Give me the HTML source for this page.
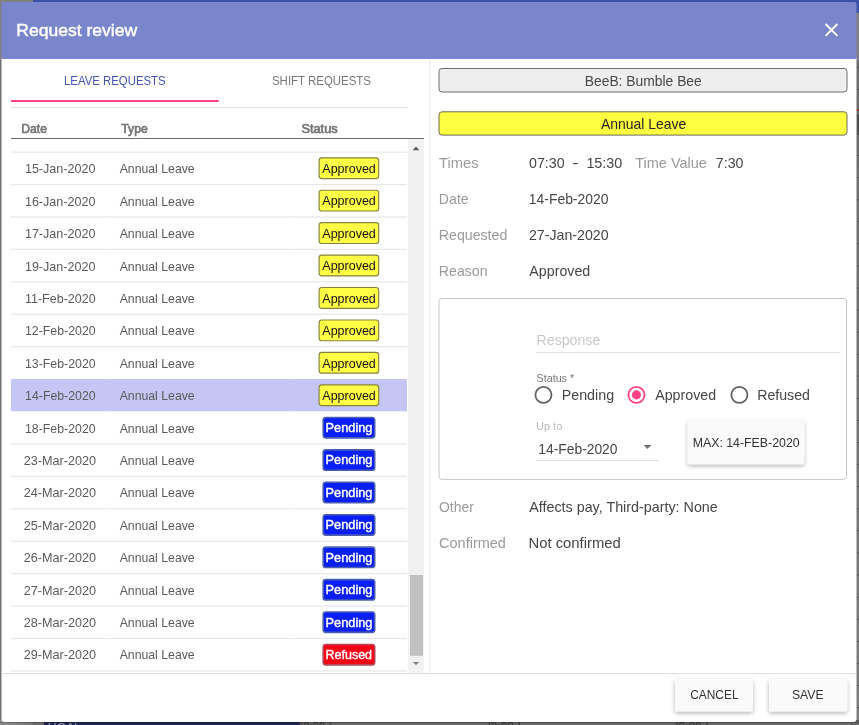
<!DOCTYPE html>
<html><head><meta charset="utf-8"><title>Request review</title>
<style>
html,body{margin:0;padding:0}
body{width:859px;height:725px;overflow:hidden;position:relative;background:#808080;font-family:"Liberation Sans", sans-serif;}
.a{position:absolute}
.t{position:absolute;left:0;top:0;white-space:pre;line-height:20px;transform-origin:0 0;font-family:"Liberation Sans", sans-serif;}
</style></head><body>
<svg class="a" style="left:0;top:0" width="859" height="725" viewBox="0 0 859 725">
<defs><filter id="bs" x="-20%" y="-30%" width="140%" height="180%"><feDropShadow dx="0" dy="1.8" stdDeviation="2" flood-color="#000" flood-opacity=".3"/></filter></defs>
<defs><linearGradient id="gbl" x1="0" x2="1" y1="0" y2="0"><stop offset="0" stop-color="#8e8e8e"/><stop offset="1" stop-color="#747474"/></linearGradient><linearGradient id="gbb" x1="0" x2="0" y1="0" y2="1"><stop offset="0" stop-color="#4c4c4c"/><stop offset="0.45" stop-color="#626262"/><stop offset="1" stop-color="#6a6a6a"/></linearGradient><linearGradient id="gtb" x1="0" x2="0" y1="0" y2="1"><stop offset="0" stop-color="#3d54ab"/><stop offset="1" stop-color="#364ba1"/></linearGradient><linearGradient id="grs" x1="0" x2="0" y1="0" y2="1"><stop offset="0" stop-color="#6c6c6c"/><stop offset="1" stop-color="#7e7e7e"/></linearGradient></defs>
<rect x="0.00" y="0.00" width="859.00" height="725.00" fill="#707070"/>
<rect x="0.00" y="0.00" width="33.00" height="3.00" fill="#808080"/>
<rect x="33.00" y="0.00" width="826.00" height="12.90" fill="#3b52a9"/>
<rect x="33.00" y="0.00" width="826.00" height="2.50" fill="url(#gtb)"/>
<rect x="0.00" y="2.00" width="3.00" height="58.00" fill="#808080"/>
<rect x="0.00" y="60.00" width="3.00" height="662.00" fill="#707070"/>
<rect x="855.00" y="12.90" width="4.00" height="50.00" fill="#808080"/>
<rect x="855.00" y="60.00" width="4.00" height="665.00" fill="url(#grs)"/>
<rect x="857.30" y="66.68" width="1.70" height="1.00" fill="#4a4a4a"/>
<rect x="857.30" y="88.76" width="1.70" height="1.00" fill="#4a4a4a"/>
<rect x="856.60" y="109.34" width="2.40" height="1.60" fill="#9a2525"/>
<rect x="857.30" y="155.00" width="1.70" height="1.00" fill="#4a4a4a"/>
<rect x="857.30" y="177.08" width="1.70" height="1.00" fill="#4a4a4a"/>
<rect x="857.30" y="199.16" width="1.70" height="1.00" fill="#4a4a4a"/>
<rect x="857.30" y="221.24" width="1.70" height="1.00" fill="#4a4a4a"/>
<rect x="857.30" y="243.32" width="1.70" height="1.00" fill="#4a4a4a"/>
<rect x="857.30" y="265.40" width="1.70" height="1.00" fill="#4a4a4a"/>
<rect x="857.30" y="287.48" width="1.70" height="1.00" fill="#4a4a4a"/>
<rect x="857.30" y="309.56" width="1.70" height="1.00" fill="#4a4a4a"/>
<rect x="857.30" y="331.64" width="1.70" height="1.00" fill="#4a4a4a"/>
<rect x="857.30" y="353.72" width="1.70" height="1.00" fill="#4a4a4a"/>
<rect x="857.30" y="375.80" width="1.70" height="1.00" fill="#4a4a4a"/>
<rect x="857.30" y="397.88" width="1.70" height="1.00" fill="#4a4a4a"/>
<rect x="857.30" y="419.96" width="1.70" height="1.00" fill="#4a4a4a"/>
<rect x="857.30" y="442.04" width="1.70" height="1.00" fill="#4a4a4a"/>
<rect x="857.30" y="464.12" width="1.70" height="1.00" fill="#4a4a4a"/>
<rect x="857.30" y="486.20" width="1.70" height="1.00" fill="#4a4a4a"/>
<rect x="857.30" y="508.28" width="1.70" height="1.00" fill="#4a4a4a"/>
<rect x="857.30" y="530.36" width="1.70" height="1.00" fill="#4a4a4a"/>
<rect x="857.30" y="552.44" width="1.70" height="1.00" fill="#4a4a4a"/>
<rect x="857.30" y="574.52" width="1.70" height="1.00" fill="#4a4a4a"/>
<rect x="857.30" y="596.60" width="1.70" height="1.00" fill="#4a4a4a"/>
<rect x="857.30" y="618.68" width="1.70" height="1.00" fill="#4a4a4a"/>
<rect x="857.30" y="640.76" width="1.70" height="1.00" fill="#4a4a4a"/>
<rect x="857.30" y="662.84" width="1.70" height="1.00" fill="#4a4a4a"/>
<rect x="857.30" y="684.92" width="1.70" height="1.00" fill="#4a4a4a"/>
<rect x="857.30" y="707.00" width="1.70" height="1.00" fill="#4a4a4a"/>
<rect x="857.30" y="114.30" width="1.70" height="20.40" fill="#484848"/>
<rect x="0.00" y="720.00" width="33.00" height="5.00" fill="url(#gbl)"/>
<rect x="33.00" y="720.00" width="11.00" height="5.00" fill="#696969"/>
<rect x="44.00" y="720.00" width="256.00" height="5.00" fill="#1e2350"/>
<rect x="300.00" y="720.00" width="559.00" height="5.00" fill="url(#gbb)"/>
<rect x="0.00" y="721.90" width="859.00" height="1.10" fill="#000" opacity=".22"/>
<path d="M1.5 58 H856.5 V718.95 a3 3 0 0 1 -3 3 H4.5 a3 3 0 0 1 -3 -3 Z" fill="#fff"/>
<path d="M1.5 59 V4 a2 2 0 0 1 2 -2 H854.5 a2 2 0 0 1 2 2 V59 Z" fill="#7986cb"/>
<path d="M825.55 23.95 L837.45 35.85 M837.45 23.95 L825.55 35.85" stroke="#fff" stroke-width="1.95" fill="none"/>
<rect x="11.00" y="100.00" width="207.60" height="2.00" fill="#ff4081"/>
<rect x="11.00" y="107.00" width="396.50" height="1.00" fill="#e2e2e2"/>
<rect x="11.00" y="138.00" width="413.00" height="1.00" fill="#6c6c6c"/>
<rect x="408.20" y="139.00" width="15.60" height="533.80" fill="#f1f1f1"/>
<rect x="410.00" y="575.00" width="13.00" height="80.80" fill="#c1c1c1"/>
<path d="M412.7 150.2 L416 146.7 L419.3 150.2 Z" fill="#505050"/>
<path d="M412.7 661.9 L419.3 661.9 L416 665.3 Z" fill="#858585"/>
<rect x="11.00" y="151.55" width="396.00" height="1.20" fill="#e7e7e7"/>
<rect x="11.00" y="183.97" width="396.00" height="1.20" fill="#e7e7e7"/>
<rect x="11.00" y="216.40" width="396.00" height="1.20" fill="#e7e7e7"/>
<rect x="11.00" y="248.83" width="396.00" height="1.20" fill="#e7e7e7"/>
<rect x="11.00" y="281.25" width="396.00" height="1.20" fill="#e7e7e7"/>
<rect x="11.00" y="313.67" width="396.00" height="1.20" fill="#e7e7e7"/>
<rect x="11.00" y="346.10" width="396.00" height="1.20" fill="#e7e7e7"/>
<rect x="11.00" y="443.38" width="396.00" height="1.20" fill="#e7e7e7"/>
<rect x="11.00" y="475.80" width="396.00" height="1.20" fill="#e7e7e7"/>
<rect x="11.00" y="508.22" width="396.00" height="1.20" fill="#e7e7e7"/>
<rect x="11.00" y="540.65" width="396.00" height="1.20" fill="#e7e7e7"/>
<rect x="11.00" y="573.07" width="396.00" height="1.20" fill="#e7e7e7"/>
<rect x="11.00" y="605.50" width="396.00" height="1.20" fill="#e7e7e7"/>
<rect x="11.00" y="637.92" width="396.00" height="1.20" fill="#e7e7e7"/>
<rect x="11.00" y="670.35" width="396.00" height="1.20" fill="#e7e7e7"/>
<rect x="108.70" y="139.00" width="1.00" height="533.00" fill="#fff" opacity=".8"/>
<rect x="289.70" y="139.00" width="1.00" height="533.00" fill="#fff" opacity=".8"/>
<rect x="11.00" y="379.00" width="396.00" height="32.30" fill="#c6c6f4"/>
<rect x="108.90" y="378.80" width="1.00" height="0.90" fill="#fff" opacity=".7"/>
<rect x="108.90" y="410.50" width="1.00" height="0.90" fill="#fff" opacity=".7"/>
<rect x="289.90" y="378.80" width="1.00" height="0.90" fill="#fff" opacity=".7"/>
<rect x="289.90" y="410.50" width="1.00" height="0.90" fill="#fff" opacity=".7"/>
<rect x="319.10" y="157.80" width="59.60" height="20.80" fill="#ffff45" rx="2.8" stroke="#86843c" stroke-width="1.15"/>
<rect x="319.10" y="190.23" width="59.60" height="20.80" fill="#ffff45" rx="2.8" stroke="#86843c" stroke-width="1.15"/>
<rect x="319.10" y="222.66" width="59.60" height="20.80" fill="#ffff45" rx="2.8" stroke="#86843c" stroke-width="1.15"/>
<rect x="319.10" y="255.09" width="59.60" height="20.80" fill="#ffff45" rx="2.8" stroke="#86843c" stroke-width="1.15"/>
<rect x="319.10" y="287.52" width="59.60" height="20.80" fill="#ffff45" rx="2.8" stroke="#86843c" stroke-width="1.15"/>
<rect x="319.10" y="319.95" width="59.60" height="20.80" fill="#ffff45" rx="2.8" stroke="#86843c" stroke-width="1.15"/>
<rect x="319.10" y="352.38" width="59.60" height="20.80" fill="#ffff45" rx="2.8" stroke="#86843c" stroke-width="1.15"/>
<rect x="319.10" y="384.81" width="59.60" height="20.80" fill="#ffff45" rx="2.8" stroke="#86843c" stroke-width="1.15"/>
<rect x="323.20" y="417.44" width="51.50" height="20.40" fill="#0a1ff5" rx="2.6" stroke="#4a5fb2" stroke-width="1.6"/>
<rect x="323.20" y="449.87" width="51.50" height="20.40" fill="#0a1ff5" rx="2.6" stroke="#4a5fb2" stroke-width="1.6"/>
<rect x="323.20" y="482.30" width="51.50" height="20.40" fill="#0a1ff5" rx="2.6" stroke="#4a5fb2" stroke-width="1.6"/>
<rect x="323.20" y="514.73" width="51.50" height="20.40" fill="#0a1ff5" rx="2.6" stroke="#4a5fb2" stroke-width="1.6"/>
<rect x="323.20" y="547.16" width="51.50" height="20.40" fill="#0a1ff5" rx="2.6" stroke="#4a5fb2" stroke-width="1.6"/>
<rect x="323.20" y="579.59" width="51.50" height="20.40" fill="#0a1ff5" rx="2.6" stroke="#4a5fb2" stroke-width="1.6"/>
<rect x="323.20" y="612.02" width="51.50" height="20.40" fill="#0a1ff5" rx="2.6" stroke="#4a5fb2" stroke-width="1.6"/>
<rect x="323.20" y="644.45" width="51.50" height="20.40" fill="#fa0016" rx="2.6" stroke="#b8475a" stroke-width="1.6"/>
<rect x="429.20" y="59.00" width="1.40" height="614.00" fill="#eeeeee"/>
<rect x="1.50" y="673.00" width="855.00" height="1.00" fill="#dcdcdc"/>
<rect x="675.00" y="679.00" width="78.00" height="32.50" fill="#fafafa" rx="2" filter="url(#bs)"/>
<rect x="769.00" y="679.00" width="78.20" height="32.50" fill="#fafafa" rx="2" filter="url(#bs)"/>
<rect x="439.00" y="68.50" width="408.00" height="23.50" fill="#eeeeee" rx="3" stroke="#6c6c6c" stroke-width="1"/>
<rect x="439.00" y="111.80" width="408.00" height="23.30" fill="#ffff42" rx="3" stroke="#6c6c55" stroke-width="1"/>
<rect x="439.00" y="298.50" width="407.50" height="180.90" fill="#fff" rx="3" stroke="#c6c6c6" stroke-width="1"/>
<rect x="536.30" y="352.00" width="304.00" height="1.00" fill="#e0e0e0"/>
<circle cx="543.45" cy="394.9" r="8.05" fill="none" stroke="#616161" stroke-width="1.8"/>
<circle cx="636.45" cy="394.9" r="8.05" fill="none" stroke="#ff4081" stroke-width="1.8"/>
<circle cx="636.45" cy="394.9" r="4.55" fill="#ff4081"/>
<circle cx="739.4" cy="394.9" r="8.05" fill="none" stroke="#616161" stroke-width="1.8"/>
<rect x="536.50" y="460.00" width="122.20" height="1.00" fill="#dddddd"/>
<path d="M643.4 445 L651.6 445 L647.5 449.1 Z" fill="#757575"/>
<rect x="687.70" y="420.60" width="116.40" height="43.60" fill="#fafafa" rx="2" filter="url(#bs)"/>
</svg>
<div class="a" style="left:0;top:0;width:859px;height:725px;will-change:transform">
<span class="t" style="font-size:17.2px;color:#fff;transform:translate(16.26px,19.60px) scaleX(1.0207);-webkit-text-stroke:0.45px #fff">Request review</span>
<span class="t" style="font-size:12.6px;color:#4354b5;transform:translate(64.03px,71.00px) scaleX(0.9033)">LEAVE REQUESTS</span>
<span class="t" style="font-size:12.6px;color:#787878;transform:translate(271.99px,71.00px) scaleX(0.9088)">SHIFT REQUESTS</span>
<span class="t" style="font-size:12.6px;color:#747474;transform:translate(21.32px,119.00px) scaleX(0.9640);-webkit-text-stroke:0.65px #747474">Date</span>
<span class="t" style="font-size:12.6px;color:#747474;transform:translate(121.31px,119.00px) scaleX(0.9647);-webkit-text-stroke:0.65px #747474">Type</span>
<span class="t" style="font-size:12.6px;color:#747474;transform:translate(301.38px,119.00px) scaleX(1.0168);-webkit-text-stroke:0.65px #747474">Status</span>
<span class="t" style="font-size:12.6px;color:#5a5a5a;transform:translate(24.89px,159.40px) scaleX(0.9977)">15-Jan-2020</span>
<span class="t" style="font-size:12.6px;color:#5a5a5a;transform:translate(119.67px,159.40px) scaleX(0.9733)">Annual Leave</span>
<span class="t" style="font-size:12.6px;color:#111;transform:translate(322.32px,159.00px) scaleX(0.9920)">Approved</span>
<span class="t" style="font-size:12.6px;color:#5a5a5a;transform:translate(24.89px,191.80px) scaleX(0.9977)">16-Jan-2020</span>
<span class="t" style="font-size:12.6px;color:#5a5a5a;transform:translate(119.67px,191.80px) scaleX(0.9733)">Annual Leave</span>
<span class="t" style="font-size:12.6px;color:#111;transform:translate(322.32px,191.00px) scaleX(0.9920)">Approved</span>
<span class="t" style="font-size:12.6px;color:#5a5a5a;transform:translate(24.89px,224.20px) scaleX(0.9977)">17-Jan-2020</span>
<span class="t" style="font-size:12.6px;color:#5a5a5a;transform:translate(119.67px,224.20px) scaleX(0.9733)">Annual Leave</span>
<span class="t" style="font-size:12.6px;color:#111;transform:translate(322.32px,224.00px) scaleX(0.9920)">Approved</span>
<span class="t" style="font-size:12.6px;color:#5a5a5a;transform:translate(24.89px,256.60px) scaleX(0.9977)">19-Jan-2020</span>
<span class="t" style="font-size:12.6px;color:#5a5a5a;transform:translate(119.67px,256.60px) scaleX(0.9733)">Annual Leave</span>
<span class="t" style="font-size:12.6px;color:#111;transform:translate(322.32px,256.00px) scaleX(0.9920)">Approved</span>
<span class="t" style="font-size:12.6px;color:#5a5a5a;transform:translate(24.98px,289.00px) scaleX(0.9921)">11-Feb-2020</span>
<span class="t" style="font-size:12.6px;color:#5a5a5a;transform:translate(119.67px,289.00px) scaleX(0.9733)">Annual Leave</span>
<span class="t" style="font-size:12.6px;color:#111;transform:translate(322.32px,289.00px) scaleX(0.9920)">Approved</span>
<span class="t" style="font-size:12.6px;color:#5a5a5a;transform:translate(25.01px,321.40px) scaleX(0.9787)">12-Feb-2020</span>
<span class="t" style="font-size:12.6px;color:#5a5a5a;transform:translate(119.67px,321.40px) scaleX(0.9733)">Annual Leave</span>
<span class="t" style="font-size:12.6px;color:#111;transform:translate(322.32px,321.00px) scaleX(0.9920)">Approved</span>
<span class="t" style="font-size:12.6px;color:#5a5a5a;transform:translate(25.01px,353.80px) scaleX(0.9787)">13-Feb-2020</span>
<span class="t" style="font-size:12.6px;color:#5a5a5a;transform:translate(119.67px,353.80px) scaleX(0.9733)">Annual Leave</span>
<span class="t" style="font-size:12.6px;color:#111;transform:translate(322.32px,354.00px) scaleX(0.9920)">Approved</span>
<span class="t" style="font-size:12.6px;color:#5a5a5a;transform:translate(25.10px,386.20px) scaleX(0.9776)">14-Feb-2020</span>
<span class="t" style="font-size:12.6px;color:#5a5a5a;transform:translate(119.67px,386.20px) scaleX(0.9733)">Annual Leave</span>
<span class="t" style="font-size:12.6px;color:#111;transform:translate(322.32px,386.00px) scaleX(0.9920)">Approved</span>
<span class="t" style="font-size:12.6px;color:#5a5a5a;transform:translate(25.01px,418.60px) scaleX(0.9787)">18-Feb-2020</span>
<span class="t" style="font-size:12.6px;color:#5a5a5a;transform:translate(119.67px,418.60px) scaleX(0.9733)">Annual Leave</span>
<span class="t" style="font-size:12.6px;color:#fff;transform:translate(325.54px,418.00px) scaleX(1.0150);-webkit-text-stroke:0.4px #fff">Pending</span>
<span class="t" style="font-size:12.6px;color:#5a5a5a;transform:translate(23.82px,451.00px) scaleX(1.0026)">23-Mar-2020</span>
<span class="t" style="font-size:12.6px;color:#5a5a5a;transform:translate(119.67px,451.00px) scaleX(0.9733)">Annual Leave</span>
<span class="t" style="font-size:12.6px;color:#fff;transform:translate(325.54px,450.00px) scaleX(1.0150);-webkit-text-stroke:0.4px #fff">Pending</span>
<span class="t" style="font-size:12.6px;color:#5a5a5a;transform:translate(23.82px,483.40px) scaleX(1.0026)">24-Mar-2020</span>
<span class="t" style="font-size:12.6px;color:#5a5a5a;transform:translate(119.67px,483.40px) scaleX(0.9733)">Annual Leave</span>
<span class="t" style="font-size:12.6px;color:#fff;transform:translate(325.54px,483.00px) scaleX(1.0150);-webkit-text-stroke:0.4px #fff">Pending</span>
<span class="t" style="font-size:12.6px;color:#5a5a5a;transform:translate(23.82px,515.80px) scaleX(1.0026)">25-Mar-2020</span>
<span class="t" style="font-size:12.6px;color:#5a5a5a;transform:translate(119.67px,515.80px) scaleX(0.9733)">Annual Leave</span>
<span class="t" style="font-size:12.6px;color:#fff;transform:translate(325.54px,515.00px) scaleX(1.0150);-webkit-text-stroke:0.4px #fff">Pending</span>
<span class="t" style="font-size:12.6px;color:#5a5a5a;transform:translate(23.82px,548.20px) scaleX(1.0026)">26-Mar-2020</span>
<span class="t" style="font-size:12.6px;color:#5a5a5a;transform:translate(119.67px,548.20px) scaleX(0.9733)">Annual Leave</span>
<span class="t" style="font-size:12.6px;color:#fff;transform:translate(325.54px,548.00px) scaleX(1.0150);-webkit-text-stroke:0.4px #fff">Pending</span>
<span class="t" style="font-size:12.6px;color:#5a5a5a;transform:translate(23.82px,580.60px) scaleX(1.0026)">27-Mar-2020</span>
<span class="t" style="font-size:12.6px;color:#5a5a5a;transform:translate(119.67px,580.60px) scaleX(0.9733)">Annual Leave</span>
<span class="t" style="font-size:12.6px;color:#fff;transform:translate(325.54px,580.00px) scaleX(1.0150);-webkit-text-stroke:0.4px #fff">Pending</span>
<span class="t" style="font-size:12.6px;color:#5a5a5a;transform:translate(23.82px,613.00px) scaleX(1.0026)">28-Mar-2020</span>
<span class="t" style="font-size:12.6px;color:#5a5a5a;transform:translate(119.67px,613.00px) scaleX(0.9733)">Annual Leave</span>
<span class="t" style="font-size:12.6px;color:#fff;transform:translate(325.54px,613.00px) scaleX(1.0150);-webkit-text-stroke:0.4px #fff">Pending</span>
<span class="t" style="font-size:12.6px;color:#5a5a5a;transform:translate(23.82px,645.40px) scaleX(1.0026)">29-Mar-2020</span>
<span class="t" style="font-size:12.6px;color:#5a5a5a;transform:translate(119.67px,645.40px) scaleX(0.9733)">Annual Leave</span>
<span class="t" style="font-size:12.6px;color:#fff;transform:translate(325.48px,645.00px) scaleX(0.9926);-webkit-text-stroke:0.4px #fff">Refused</span>
<span class="t" style="font-size:14.4px;color:#484848;transform:translate(584.74px,70.80px) scaleX(0.9625)">BeeB: Bumble Bee</span>
<span class="t" style="font-size:14.4px;color:#222;transform:translate(600.94px,113.60px) scaleX(0.9691)">Annual Leave</span>
<span class="t" style="font-size:14.4px;color:#9a9a9a;transform:translate(439.03px,153.00px) scaleX(1.0227)">Times</span>
<span class="t" style="font-size:14.4px;color:#464646;transform:translate(529.07px,153.00px) scaleX(0.9869)">07:30</span>
<span class="t" style="font-size:14.4px;color:#464646;transform:translate(572.28px,153.00px) scaleX(1.3039)">-</span>
<span class="t" style="font-size:14.4px;color:#464646;transform:translate(586.38px,153.00px) scaleX(0.9986)">15:30</span>
<span class="t" style="font-size:14.4px;color:#9a9a9a;transform:translate(635.22px,153.00px) scaleX(1.0070)">Time Value</span>
<span class="t" style="font-size:14.4px;color:#464646;transform:translate(715.79px,153.00px) scaleX(0.9877)">7:30</span>
<span class="t" style="font-size:14.4px;color:#9a9a9a;transform:translate(438.86px,189.00px) scaleX(0.9816)">Date</span>
<span class="t" style="font-size:14.4px;color:#464646;transform:translate(528.76px,189.00px) scaleX(0.9675)">14-Feb-2020</span>
<span class="t" style="font-size:14.4px;color:#9a9a9a;transform:translate(438.83px,225.00px) scaleX(0.9831)">Requested</span>
<span class="t" style="font-size:14.4px;color:#464646;transform:translate(528.92px,225.00px) scaleX(0.9862)">27-Jan-2020</span>
<span class="t" style="font-size:14.4px;color:#9a9a9a;transform:translate(438.84px,261.00px) scaleX(0.9824)">Reason</span>
<span class="t" style="font-size:14.4px;color:#464646;transform:translate(529.37px,261.00px) scaleX(0.9887)">Approved</span>
<span class="t" style="font-size:14.4px;color:#9a9a9a;transform:translate(438.99px,497.00px) scaleX(0.9680)">Other</span>
<span class="t" style="font-size:14.4px;color:#464646;transform:translate(529.21px,497.00px) scaleX(0.9947)">Affects pay, Third-party: None</span>
<span class="t" style="font-size:14.4px;color:#9a9a9a;transform:translate(439.01px,533.00px) scaleX(1.0083)">Confirmed</span>
<span class="t" style="font-size:14.4px;color:#464646;transform:translate(528.46px,533.00px) scaleX(1.0309)">Not confirmed</span>
<span class="t" style="font-size:14.4px;color:#c8c8c8;transform:translate(536.56px,330.00px) scaleX(0.9829)">Response</span>
<span class="t" style="font-size:10.8px;color:#777;transform:translate(536.53px,368.00px) scaleX(0.9947)">Status *</span>
<span class="t" style="font-size:14.4px;color:#464646;transform:translate(561.74px,384.70px) scaleX(0.9908)">Pending</span>
<span class="t" style="font-size:14.4px;color:#464646;transform:translate(655.22px,384.70px) scaleX(0.9885)">Approved</span>
<span class="t" style="font-size:14.4px;color:#464646;transform:translate(757.18px,384.70px) scaleX(0.9833)">Refused</span>
<span class="t" style="font-size:10.8px;color:#b8b8b8;transform:translate(536.07px,416.20px) scaleX(1.0149)">Up to</span>
<span class="t" style="font-size:14.4px;color:#464646;transform:translate(538.30px,438.80px) scaleX(0.9612)">14-Feb-2020</span>
<span class="t" style="font-size:12.6px;color:#333;transform:translate(692.68px,432.80px) scaleX(0.9791)">MAX: 14-FEB-2020</span>
<span class="t" style="font-size:12.6px;color:#333;transform:translate(690.22px,685.20px) scaleX(0.9451)">CANCEL</span>
<span class="t" style="font-size:12.6px;color:#333;transform:translate(791.93px,685.20px) scaleX(0.9703)">SAVE</span>
<span class="t" style="font-size:12.6px;color:#2a2a2a;transform:translate(300.62px,717.40px) scaleX(0.8751)">|0:00 /</span>
<span class="t" style="font-size:12.6px;color:#2a2a2a;transform:translate(487.77px,717.40px) scaleX(0.9334)">|0:00 /</span>
<span class="t" style="font-size:12.6px;color:#2a2a2a;transform:translate(675.57px,717.40px) scaleX(0.9334)">|0:00 /</span>
<span class="t" style="font-size:13.5px;color:#a2a4b8;transform:translate(47.79px,717.60px) scaleX(0.9130)">HOA'-</span>
</div>
</body></html>
